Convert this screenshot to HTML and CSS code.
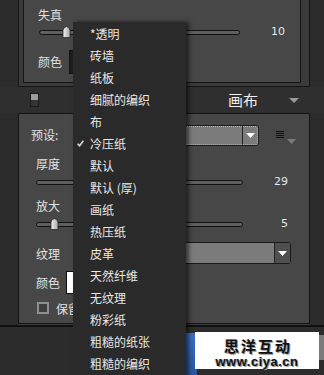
FILE: index.html
```html
<!DOCTYPE html>
<html lang="zh-CN">
<head>
    <meta charset="UTF-8">
    <meta name="viewport" content="width=device-width, initial-scale=1.0">
    <title>画布</title>
    <link rel="stylesheet" href="styles.css">
</head>
<body>
<div class="screen">
    <!-- filter options (top, scrolled) -->
    <div class="filter-group">
        <div class="filter-box">
            <div class="f-label">失真</div>
            <div class="slider-row top-slider">
                <div class="track-wrap">
                    <div class="track"></div>
                    <svg class="thumb" style="left:23px" width="9" height="12" viewBox="0 0 9 12"><defs><linearGradient id="tg1" x1="0" y1="0" x2="1" y2="0"><stop offset="0" stop-color="#f2f2f2"/><stop offset="1" stop-color="#a8a8a8"/></linearGradient></defs><path d="M1 11.5V4.5Q1 1.5 4.5 0.5Q8 1.5 8 4.5V11.5Z" fill="url(#tg1)" stroke="#2a2a2a" stroke-width="0.8"/></svg>
                </div>
                <span class="value">10</span>
            </div>
            <div class="color-row">
                <span class="f-label">颜色</span>
                <div class="swatch dark"></div>
            </div>
        </div>
    </div>

    <div class="section-head">
        <div class="toggle"></div>
        <div class="title">画布</div>
        <svg class="head-arrow" width="10" height="5" viewBox="0 0 10 5"><path d="M0 0H10L5 5Z" fill="#9a9a9a"/></svg>
    </div>

    <div class="canvas-panel">
        <div class="preset-row">
            <span class="p-label">预设:</span>
            <div class="select focus">
                <div class="sel-btn"><svg width="9" height="5" viewBox="0 0 9 5"><path d="M0 0H9L4.5 5Z" fill="#fff"/></svg></div>
            </div>
            <svg class="menu-icon" width="8" height="8" viewBox="0 0 8 8"><path d="M0 0.5H8M0 2.5H8M0 4.5H8M0 6.5H8" stroke="#111" stroke-width="1"/></svg>
            <svg class="menu-arrow" width="9" height="5" viewBox="0 0 9 5"><path d="M0 0H9L4.5 5Z" fill="#7a7a7a"/></svg>
        </div>

        <div class="c-label">厚度</div>
        <div class="slider-row low-slider">
            <div class="track-wrap">
                <div class="track"></div>
                <svg class="thumb" style="left:57px" width="9" height="12" viewBox="0 0 9 12"><path d="M1 11.5V4.5Q1 1.5 4.5 0.5Q8 1.5 8 4.5V11.5Z" fill="url(#tg1)" stroke="#2a2a2a" stroke-width="0.8"/></svg>
            </div>
            <span class="value">29</span>
        </div>

        <div class="c-label">放大</div>
        <div class="slider-row low-slider">
            <div class="track-wrap">
                <div class="track"></div>
                <svg class="thumb" style="left:14px" width="9" height="12" viewBox="0 0 9 12"><path d="M1 11.5V4.5Q1 1.5 4.5 0.5Q8 1.5 8 4.5V11.5Z" fill="url(#tg1)" stroke="#2a2a2a" stroke-width="0.8"/></svg>
            </div>
            <span class="value">5</span>
        </div>

        <div class="texture-row">
            <span class="t-label">纹理</span>
            <div class="select wide">
                <div class="sel-btn dark-btn"><svg width="9" height="5" viewBox="0 0 9 5"><path d="M0 0H9L4.5 5Z" fill="#fff"/></svg></div>
            </div>
        </div>

        <div class="color-row low">
            <span class="t-label short">颜色</span>
            <div class="swatch white"></div>
        </div>

        <div class="check-row">
            <span class="checkbox"></span>
            <span class="check-text">保留</span>
        </div>
    </div>
    <div class="panel-foot"></div>
    <div class="rule"></div>

    <div class="actions">
        <div class="btn-ok"></div>
        <div class="btn-cancel"></div>
    </div>

    <!-- texture dropdown -->
    <div class="menu">
        <div class="item"><span class="chk"></span>*透明</div>
        <div class="item"><span class="chk"></span>砖墙</div>
        <div class="item"><span class="chk"></span>纸板</div>
        <div class="item"><span class="chk"></span>细腻的编织</div>
        <div class="item"><span class="chk"></span>布</div>
        <div class="item"><span class="chk"><svg width="7" height="7" viewBox="0 0 7 7"><path d="M0.6 3.8L2.6 5.8L6.4 0.8" fill="none" stroke="#d8d8d8" stroke-width="1.6"/></svg></span>冷压纸</div>
        <div class="item"><span class="chk"></span>默认</div>
        <div class="item"><span class="chk"></span>默认 (厚)</div>
        <div class="item"><span class="chk"></span>画纸</div>
        <div class="item"><span class="chk"></span>热压纸</div>
        <div class="item"><span class="chk"></span>皮革</div>
        <div class="item"><span class="chk"></span>天然纤维</div>
        <div class="item"><span class="chk"></span>无纹理</div>
        <div class="item"><span class="chk"></span>粉彩纸</div>
        <div class="item"><span class="chk"></span>粗糙的纸张</div>
        <div class="item"><span class="chk"></span>粗糙的编织</div>
    </div>

    <div class="watermark">
        <div class="wm-name">思洋互动</div>
        <div class="wm-url">www.ciya.cn</div>
    </div>
</div>
</body>
</html>
```

FILE: styles.css
```css
body {
  margin: 0;
  background: #2c2c2c;
  font-family: "Noto Sans CJK SC", sans-serif;
  font-size: 12px;
  color: #e2e2e2;
}

.screen {
    position: relative;
    width: 324px;
    height: 375px;
    overflow: hidden;
}

/* top group */
.filter-group {
    margin-left: 18px;
    width: 292px;
    box-sizing: border-box;
    background: #3b3b3b;
    border: 1px solid #141414;
    border-top: none;
    padding: 0 8px 3px 4px;
}

.filter-box {
    height: 83px;
    box-sizing: border-box;
    background: #474747;
    border: 1px solid #141414;
    border-top: none;
    padding-top: 7px;
}

.f-label {
    padding-left: 14px;
    height: 16px;
    line-height: 16px;
}

.slider-row {
    display: flex;
    align-items: center;
    height: 12px;
    margin-top: 3px;
}

.track-wrap {
    position: relative;
    display: flex;
    align-items: center;
    flex: none;
    height: 12px;
}

.track {
    width: 100%;
    height: 5px;
    box-sizing: border-box;
    border: 1px solid #111;
    border-radius: 3px;
    background: #5f5f5f;
}

.thumb {
    position: absolute;
    top: 0;
}

.top-slider .track-wrap {
    margin-left: 15px;
    width: 201px;
}

.value {
    margin-left: auto;
    font-family: "DejaVu Sans", sans-serif;
    font-size: 11px;
    line-height: 12px;
    color: #e6e6e6;
}

.top-slider .value { padding-right: 15px; }

.color-row {
    display: flex;
    align-items: center;
    height: 24px;
    margin-top: 12px;
}

.swatch {
    box-sizing: border-box;
    width: 60px;
    height: 24px;
    border: 1px solid #111;
    margin-left: 7px;
}
.swatch.dark { background: #1f1f1f; }
.swatch.white { background: #fff; height: 23px; margin-left: 0; }

/* header */
.section-head {
    display: flex;
    align-items: center;
    height: 26px;
    background: #2f2f2f;
}

.toggle {
    margin-left: 30px;
    width: 9px;
    height: 14px;
    box-sizing: border-box;
    border: 1px solid #1b1b1b;
    background: linear-gradient(#9c9c9c 50%, #343434 50%);
}

.title {
    margin-left: 189px;
    font-size: 15px;
    line-height: 18px;
    color: #f0f0f0;
}

.head-arrow { margin-left: 31px; }

/* canvas panel */
.canvas-panel {
    margin-left: 18px;
    width: 292px;
    box-sizing: border-box;
    background: #474747;
    border: 1px solid #141414;
    padding-bottom: 7px;
}

.preset-row {
    display: flex;
    align-items: flex-start;
    height: 21px;
    margin-top: 11px;
    padding-left: 12px;
}

.p-label {
    width: 45px;
    line-height: 19px;
}

.select {
    position: relative;
    display: flex;
    justify-content: flex-end;
    box-sizing: border-box;
    width: 183px;
    height: 21px;
    background: #7b7b7b;
    border: 1px solid #1a1a1a;
    border-radius: 0 3px 3px 0;
}

.select.focus {
    outline: 1px dotted #b8b8b8;
    outline-offset: -2px;
}

.select.wide {
    width: 215px;
    height: 22px;
}

.sel-btn {
    width: 15px;
    display: flex;
    align-items: center;
    justify-content: center;
    border-left: 1px solid #222;
}

.dark-btn {
    background: #4f4f4f;
    border-radius: 0 2px 2px 0;
}

.menu-icon {
    margin-left: 17px;
    margin-top: 6px;
}

.menu-arrow {
    margin-left: 3px;
    margin-top: 14px;
}

.c-label {
    padding-left: 17px;
    height: 16px;
    line-height: 16px;
    margin-top: 10px;
}

.low-slider {
    margin-top: 4px;
    padding-left: 17px;
    padding-right: 21px;
}

.low-slider .track-wrap { width: 207px; }

.texture-row {
    display: flex;
    align-items: center;
    margin-top: 12px;
    padding-left: 17px;
}

.t-label { width: 40px; }
.t-label.short { width: 30px; }

.color-row.low {
    margin-top: 7px;
    height: 23px;
    padding-left: 17px;
}

.check-row {
    display: flex;
    align-items: center;
    height: 16px;
    margin-top: 6px;
    padding-left: 18px;
}

.checkbox {
    width: 12px;
    height: 12px;
    box-sizing: border-box;
    border: 2px solid #8e8e8e;
    background: #3e3e3e;
}

.check-text {
    margin-left: 7px;
}

.panel-foot {
    margin-left: 18px;
    width: 292px;
    height: 1px;
    background: #3b3b3b;
}

.rule {
    height: 2px;
    background: #111;
}

/* bottom buttons */
.actions {
    display: flex;
    align-items: flex-start;
    padding-top: 6px;
}

.btn-ok {
    margin-left: 130px;
    width: 70px;
    height: 42px;
    background: linear-gradient(#3c6fc4, #2b56a2);
}

.btn-cancel {
    margin-left: 50px;
    margin-top: 2px;
    width: 80px;
    height: 25px;
    background: #7a7a7a;
}

/* dropdown menu */
.menu {
    position: absolute;
    left: 73px;
    top: 22px;
    width: 113px;
    height: 370px;
    background: #2a2a2a;
    box-shadow: 3px 0 4px rgba(0, 0, 0, 0.55);
}

.item {
    display: flex;
    align-items: center;
    height: 22px;
    padding-left: 4px;
    color: #e8e8e8;
    white-space: nowrap;
}

.chk {
    display: flex;
    align-items: center;
    width: 13px;
}

/* watermark */
.watermark {
    position: absolute;
    left: 195px;
    top: 332px;
    width: 124px;
    height: 37px;
    background: #fff;
    text-align: center;
    color: #111;
    font-weight: bold;
}

.wm-name {
    font-size: 15px;
    line-height: 15px;
    margin-top: 6px;
    letter-spacing: 2px;
    text-indent: 2px;
    text-shadow: 1px 1px 0 #9a9a9a, -1px 0 0 #cfcfcf;
}

.wm-url {
    margin-top: 2px;
    font-family: "Liberation Sans", sans-serif;
    font-size: 13px;
    line-height: 13px;
    letter-spacing: 0.5px;
    text-shadow: 1px 1px 0 #9a9a9a, -1px 0 0 #cfcfcf;
}
```
